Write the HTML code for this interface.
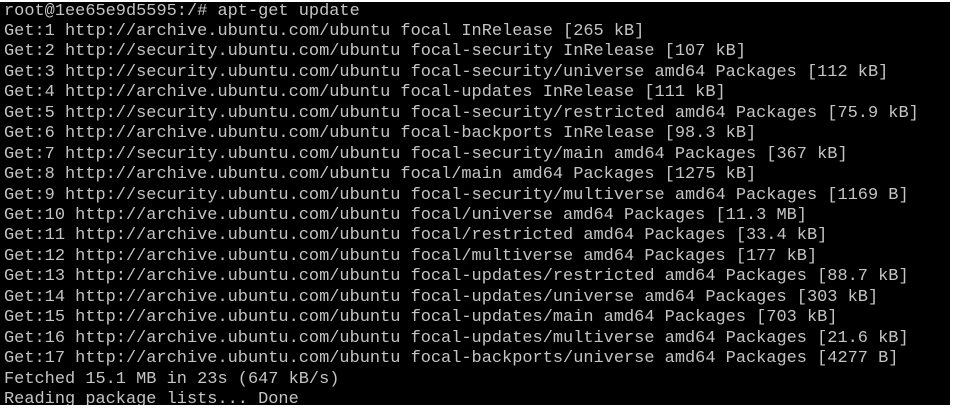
<!DOCTYPE html>
<html><head><style>
html,body{margin:0;padding:0;background:#fff;width:977px;height:408px;overflow:hidden}
.t{position:absolute;left:0;top:2px;width:950px;height:403px;background:#000;overflow:hidden}
pre{margin:0;position:absolute;left:4px;top:-0.5px;font-family:"Liberation Mono",monospace;font-size:16.95px;line-height:20.45px;color:#c4c4c4;letter-spacing:0}
</style></head><body><div class="t"><pre>root@1ee65e9d5595:/# apt-get update
Get:1 http://archive.ubuntu.com/ubuntu focal InRelease [265 kB]
Get:2 http://security.ubuntu.com/ubuntu focal-security InRelease [107 kB]
Get:3 http://security.ubuntu.com/ubuntu focal-security/universe amd64 Packages [112 kB]
Get:4 http://archive.ubuntu.com/ubuntu focal-updates InRelease [111 kB]
Get:5 http://security.ubuntu.com/ubuntu focal-security/restricted amd64 Packages [75.9 kB]
Get:6 http://archive.ubuntu.com/ubuntu focal-backports InRelease [98.3 kB]
Get:7 http://security.ubuntu.com/ubuntu focal-security/main amd64 Packages [367 kB]
Get:8 http://archive.ubuntu.com/ubuntu focal/main amd64 Packages [1275 kB]
Get:9 http://security.ubuntu.com/ubuntu focal-security/multiverse amd64 Packages [1169 B]
Get:10 http://archive.ubuntu.com/ubuntu focal/universe amd64 Packages [11.3 MB]
Get:11 http://archive.ubuntu.com/ubuntu focal/restricted amd64 Packages [33.4 kB]
Get:12 http://archive.ubuntu.com/ubuntu focal/multiverse amd64 Packages [177 kB]
Get:13 http://archive.ubuntu.com/ubuntu focal-updates/restricted amd64 Packages [88.7 kB]
Get:14 http://archive.ubuntu.com/ubuntu focal-updates/universe amd64 Packages [303 kB]
Get:15 http://archive.ubuntu.com/ubuntu focal-updates/main amd64 Packages [703 kB]
Get:16 http://archive.ubuntu.com/ubuntu focal-updates/multiverse amd64 Packages [21.6 kB]
Get:17 http://archive.ubuntu.com/ubuntu focal-backports/universe amd64 Packages [4277 B]
Fetched 15.1 MB in 23s (647 kB/s)
Reading package lists... Done</pre></div></body></html>
